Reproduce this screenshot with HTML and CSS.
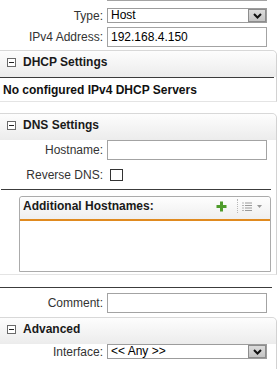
FILE: index.html
```html
<!DOCTYPE html>
<html lang="en">
<head>
  <meta charset="UTF-8">
  <meta name="viewport" content="width=device-width, initial-scale=1.0">
  <title>Edit Host</title>
  <link rel="stylesheet" href="styles.css">
</head>
<body>
  <div class="form">
    <div class="row row-cut">
      <span class="label"></span>
      <input class="text" type="text">
    </div>

    <div class="row row-type">
      <label class="label">Type:</label>
      <div class="select">
        <span class="select-value">Host</span>
        <span class="select-btn">
          <svg width="9" height="6" viewBox="0 0 9 6"><path d="M1 1l3.5 3.5L8 1" fill="none" stroke="#111" stroke-width="2"/></svg>
        </span>
      </div>
    </div>

    <div class="row row-gap">
      <label class="label" for="ipv4">IPv4 Address:</label>
      <input class="text" id="ipv4" type="text" value="192.168.4.150">
    </div>

    <!-- DHCP -->
    <div class="panel panel-dhcp">
      <div class="panel-head">
        <svg class="toggle" width="9" height="9" viewBox="0 0 9 9"><rect x="0.5" y="0.5" width="8" height="8" fill="#fff" stroke="#6a6a6a"/><path d="M2 4.5h5" stroke="#222"/></svg>
        <span>DHCP Settings</span>
      </div>
      <div class="panel-body dhcp-body">No configured IPv4 DHCP Servers</div>
    </div>

    <!-- DNS -->
    <div class="panel panel-dns">
      <div class="panel-head">
        <svg class="toggle" width="9" height="9" viewBox="0 0 9 9"><rect x="0.5" y="0.5" width="8" height="8" fill="#fff" stroke="#6a6a6a"/><path d="M2 4.5h5" stroke="#222"/></svg>
        <span>DNS Settings</span>
      </div>
      <div class="row">
        <label class="label" for="hostname">Hostname:</label>
        <input class="text" id="hostname" type="text">
      </div>
      <div class="row row-check">
        <label class="label" for="reverse">Reverse DNS:</label>
        <input class="check" id="reverse" type="checkbox">
      </div>
      <div class="rule rule-dns"></div>

      <div class="grid">
        <div class="grid-head">
          <span>Additional Hostnames:</span>
          <div class="grid-tools">
            <svg class="tool-add" width="11" height="11" viewBox="0 0 11 11"><path d="M5.5 0.5v10M0.5 5.5h10" stroke="#4f9c2c" stroke-width="3"/></svg>
            <span class="tool-sep"></span>
            <svg class="tool-list" width="10" height="9" viewBox="0 0 10 9">
              <path d="M0 1h2M0 3.5h2M0 6h2M0 8.5h2" stroke="#b5b5b5"/>
              <path d="M3 1h7M3 3.5h7M3 6h7M3 8.5h7" stroke="#9a9a9a"/>
            </svg>
            <svg class="tool-menu" width="5" height="3" viewBox="0 0 5 3"><path d="M0 0h5L2.5 3z" fill="#999"/></svg>
          </div>
        </div>
        <div class="grid-body"></div>
      </div>
    </div>

    <div class="rule rule-main"></div>

    <div class="row row-comment">
      <label class="label" for="comment">Comment:</label>
      <input class="text" id="comment" type="text">
    </div>

    <!-- Advanced -->
    <div class="panel panel-adv">
      <div class="panel-head">
        <svg class="toggle" width="9" height="9" viewBox="0 0 9 9"><rect x="0.5" y="0.5" width="8" height="8" fill="#fff" stroke="#6a6a6a"/><path d="M2 4.5h5" stroke="#222"/></svg>
        <span>Advanced</span>
      </div>
      <div class="row">
        <label class="label">Interface:</label>
        <div class="select">
          <span class="select-value">&lt;&lt; Any &gt;&gt;</span>
          <span class="select-btn">
            <svg width="9" height="6" viewBox="0 0 9 6"><path d="M1 1l3.5 3.5L8 1" fill="none" stroke="#111" stroke-width="2"/></svg>
          </span>
        </div>
      </div>
    </div>
  </div>
</body>
</html>
```

FILE: styles.css
```css
body {
  margin: 0;
  background: #fff;
  font-family: "Liberation Sans", Arial, sans-serif;
  font-size: 12px;
  color: #222;
  overflow: hidden;
}

.form {
  width: 280px;
}

.row {
  display: flex;
  align-items: center;
}

.row-cut {
  height: 1px;
  overflow: hidden;
  align-items: flex-end;
}
.row-type {
  margin-top: 7px;
}
.row-gap {
  margin-top: 4px;
}
.row-check {
  margin-top: 8px;
}
.row-comment {
  margin-top: 5px;
}

.label {
  width: 107px;
  box-sizing: border-box;
  padding-right: 4px;
  text-align: right;
  color: #333;
  line-height: 14px;
  flex-shrink: 0;
}

.text {
  box-sizing: border-box;
  width: 160px;
  height: 20px;
  margin: 0;
  padding: 0 3px;
  border: 1px solid #a3a3a3;
  background: #fff;
  font-family: "Liberation Sans", Arial, sans-serif;
  font-size: 12px;
  color: #000;
  outline: none;
}

.check {
  appearance: none;
  -webkit-appearance: none;
  box-sizing: border-box;
  width: 13px;
  height: 12px;
  margin: 0 0 0 3px;
  border: 1px solid #333;
  background: #fff;
}

.select {
  box-sizing: border-box;
  width: 160px;
  height: 15px;
  border: 1px solid #9c9c9c;
  background: #fff;
  display: flex;
  align-items: center;
  justify-content: space-between;
}
.select-value {
  padding-left: 3px;
  line-height: 13px;
  color: #000;
}
.select-btn {
  box-sizing: border-box;
  width: 18px;
  height: 13px;
  margin-right: 0;
  border: 1px solid #8d8d8d;
  background: linear-gradient(#dcdcdc, #c4c4c4);
  display: flex;
  align-items: center;
  justify-content: center;
}

.panel {
  width: 277px;
  box-sizing: border-box;
  border-top: 1px solid #d8d8d8;
  border-right: 1px solid #d2d2d2;
  border-bottom: 1px solid #e4e4e4;
  border-top-right-radius: 5px;
  background: #fff;
}
.panel-dhcp {
  margin-top: 3px;
  margin-bottom: 11px;
}
.panel-dns {
  padding-bottom: 2px;
}
.panel-adv {
  margin-top: 4px;
  height: 60px;
  border-bottom: none;
}

.panel-head {
  display: flex;
  align-items: center;
  height: 22px;
  padding: 0 0 4px 7px;
  background: linear-gradient(#fdfdfd, #ececec);
  border-top-right-radius: 5px;
  font-weight: bold;
  color: #1a1a1a;
  line-height: 14px;
}
.toggle {
  margin-right: 7px;
  flex-shrink: 0;
}

.dhcp-body {
  margin-right: 2px;
  border-top: 1px solid #3c3c3c;
  padding: 5px 3px 4px;
  line-height: 14px;
  font-weight: bold;
  color: #111;
}

.rule {
  height: 1px;
  background: #3c3c3c;
}
.rule-dns {
  margin: 7px 0 0 1px;
  width: 270px;
}
.rule-main {
  margin-top: 12px;
  width: 272px;
}

.grid {
  margin: 6px 0 0 19px;
  width: 252px;
  box-sizing: border-box;
  border: 1px solid #ababab;
  border-radius: 3px 3px 0 0;
}
.grid-head {
  display: flex;
  align-items: center;
  height: 20px;
  padding: 2px 8px 0 3px;
  background: linear-gradient(#fefefe, #efefef);
  border-bottom: 2px solid #e08a1f;
  border-radius: 3px 3px 0 0;
  font-weight: bold;
  color: #1a1a1a;
  line-height: 14px;
  align-items: flex-start;
}
.grid-tools {
  margin-left: auto;
  display: flex;
  align-items: center;
  height: 14px;
}
.tool-add {
  margin-right: 10px;
}
.tool-sep {
  width: 0;
  height: 14px;
  border-left: 1px dotted #b8b8b8;
  margin-right: 4px;
}
.tool-list {
  margin-right: 5px;
}
.grid-body {
  height: 50px;
  background: #fff;
}
```
